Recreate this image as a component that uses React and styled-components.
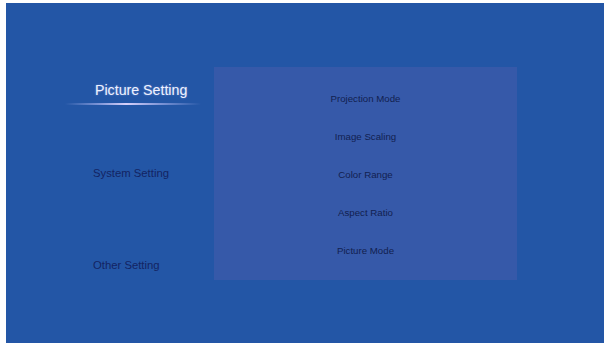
import React from 'react';
import styled, { createGlobalStyle } from 'styled-components';

const Global = createGlobalStyle`
  html, body {
    margin: 0;
    padding: 0;
    background: #ffffff;
  }
  body {
    font-family: "Liberation Sans", Arial, sans-serif;
  }
`;

const menu = [
  { label: 'Picture Setting', active: true, top: 15 },
  { label: 'System Setting', active: false, top: 60 },
  { label: 'Other Setting', active: false, top: 76 },
];

const options = ['Projection Mode', 'Image Scaling', 'Color Range', 'Aspect Ratio', 'Picture Mode'];

const Screen = styled.div`
  box-sizing: border-box;
  width: 598px;
  height: 340px;
  margin: 3px 0 0 6px;
  background: #2356a6;
  display: flex;
  align-items: flex-start;
  padding-top: 64px;
`;

const Nav = styled.nav`
  width: 208px;
  display: flex;
  flex-direction: column;
  padding-left: 59px;
  box-sizing: border-box;
`;

const NavItem = styled.div`
  margin-top: ${(p) => p.$top}px;
  padding-left: ${(p) => (p.$active ? 30 : 28)}px;
  display: flex;
  flex-direction: column;
`;

const NavLabel = styled.span`
  font-size: ${(p) => (p.$active ? '14.2px' : '11.3px')};
  line-height: 16px;
  color: ${(p) => (p.$active ? '#eef1ff' : '#132463')};
  text-shadow: ${(p) => (p.$active ? '0 0 2px rgba(200,210,255,0.5)' : 'none')};
  white-space: nowrap;
`;

const Glow = styled.div`
  width: 136px;
  height: 2px;
  margin: 5px 0 0 -30px;
  background: linear-gradient(
    90deg,
    rgba(190, 200, 255, 0) 0%,
    rgba(200, 200, 255, 0.55) 25%,
    rgba(225, 215, 255, 0.95) 45%,
    rgba(200, 200, 255, 0.55) 70%,
    rgba(190, 200, 255, 0) 100%
  );
`;

const Panel = styled.div`
  width: 303px;
  height: 213px;
  box-sizing: border-box;
  background: #3659a9;
  padding-top: 13px;
  display: flex;
  flex-direction: column;
  align-items: center;
`;

const Option = styled.div`
  height: 38px;
  line-height: 38px;
  font-size: 9.7px;
  color: #121f50;
  white-space: nowrap;
`;

const App = () => (
  <>
    <Global />
    <Screen>
      <Nav>
        {menu.map((item) => (
          <NavItem key={item.label} $top={item.top} $active={item.active}>
            <NavLabel $active={item.active}>{item.label}</NavLabel>
            {item.active && <Glow />}
          </NavItem>
        ))}
      </Nav>
      <Panel>
        {options.map((o) => (
          <Option key={o}>{o}</Option>
        ))}
      </Panel>
    </Screen>
  </>
);

export default App;
